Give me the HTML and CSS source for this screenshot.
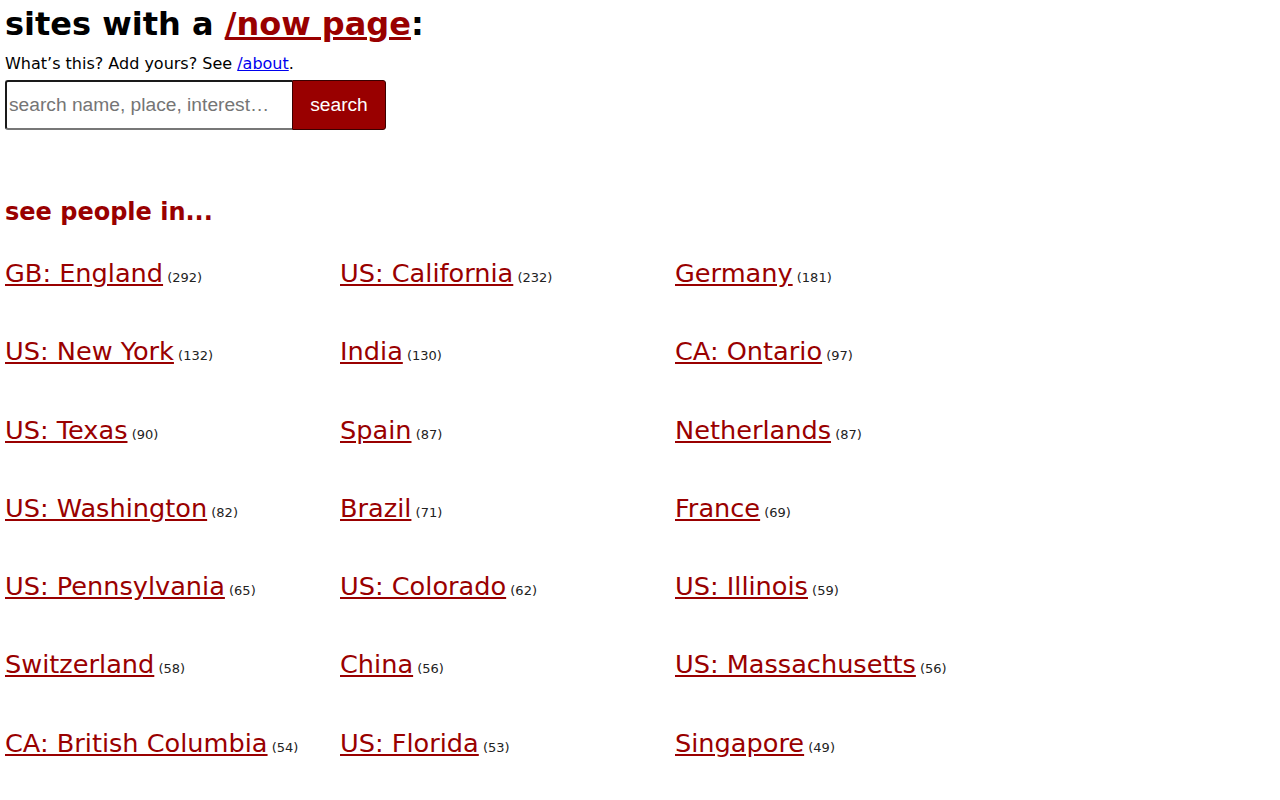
FILE: index.html
```html
<!DOCTYPE html>
<html>
<head>
<meta charset="utf-8">
<link rel="stylesheet" href="styles.css">
</head>
<body>
<h1 class="title">sites with a <a href="#">/now page</a>:</h1>
<p class="intro">What’s this? Add yours? See <a href="#">/about</a>.</p>
<form class="search">
<input class="search-input" type="text" placeholder="search name, place, interest…">
<button class="search-button" type="button">search</button>
</form>
<h2 class="subtitle">see people in...</h2>
<ul class="places">
<li><a href="#">GB: England</a> <small>(292)</small></li>
<li><a href="#">US: California</a> <small>(232)</small></li>
<li><a href="#">Germany</a> <small>(181)</small></li>
<li><a href="#">US: New York</a> <small>(132)</small></li>
<li><a href="#">India</a> <small>(130)</small></li>
<li><a href="#">CA: Ontario</a> <small>(97)</small></li>
<li><a href="#">US: Texas</a> <small>(90)</small></li>
<li><a href="#">Spain</a> <small>(87)</small></li>
<li><a href="#">Netherlands</a> <small>(87)</small></li>
<li><a href="#">US: Washington</a> <small>(82)</small></li>
<li><a href="#">Brazil</a> <small>(71)</small></li>
<li><a href="#">France</a> <small>(69)</small></li>
<li><a href="#">US: Pennsylvania</a> <small>(65)</small></li>
<li><a href="#">US: Colorado</a> <small>(62)</small></li>
<li><a href="#">US: Illinois</a> <small>(59)</small></li>
<li><a href="#">Switzerland</a> <small>(58)</small></li>
<li><a href="#">China</a> <small>(56)</small></li>
<li><a href="#">US: Massachusetts</a> <small>(56)</small></li>
<li><a href="#">CA: British Columbia</a> <small>(54)</small></li>
<li><a href="#">US: Florida</a> <small>(53)</small></li>
<li><a href="#">Singapore</a> <small>(49)</small></li>
</ul>
</body>
</html>
```
FILE: styles.css
```css
body {
  margin: 0;
  padding: 0 5px;
  font-family: "DejaVu Sans", sans-serif;
  color: #000;
  background: #fff;
}
a {
  color: #990000;
}
.title {
  font-size: 32px;
  margin: 0;
  padding-top: 5px;
  line-height: 38px;
}
.intro {
  font-size: 16px;
  margin: 11px 0 0;
  line-height: 20px;
}
.intro a {
  color: #0000ee;
}
.search {
  display: flex;
  margin-top: 6px;
}
.search-input {
  width: 287px;
  height: 50px;
  box-sizing: border-box;
  border: 2px solid;
  border-color: #1a1a1a #444 #777 #1a1a1a;
  border-right: none;
  border-radius: 3px 0 0 3px;
  font-family: "Liberation Sans", Arial, sans-serif;
  font-size: 19.2px;
  padding: 0 2px;
  margin: 0;
}
.search-input::placeholder {
  color: #757575;
}
.search-button {
  width: 94px;
  height: 50px;
  box-sizing: border-box;
  background: #990000;
  color: #fff;
  border: 1px solid #3a0000;
  border-radius: 0 3px 3px 0;
  font-family: "Liberation Sans", Arial, sans-serif;
  font-size: 19.2px;
  margin: 0;
  padding: 0;
}
.subtitle {
  color: #990000;
  font-size: 24px;
  margin: 67px 0 0;
  line-height: 30px;
}
.places {
  list-style: none;
  margin: 31px 0 0;
  padding: 0;
  display: grid;
  grid-template-columns: repeat(3, 335px);
  grid-auto-rows: 78.3px;
}
.places li {
  font-size: 13px;
  line-height: 30px;
}
.places a {
  font-size: 25.6px;
}
.places small {
  font-size: 13px;
  color: #222;
}
```
